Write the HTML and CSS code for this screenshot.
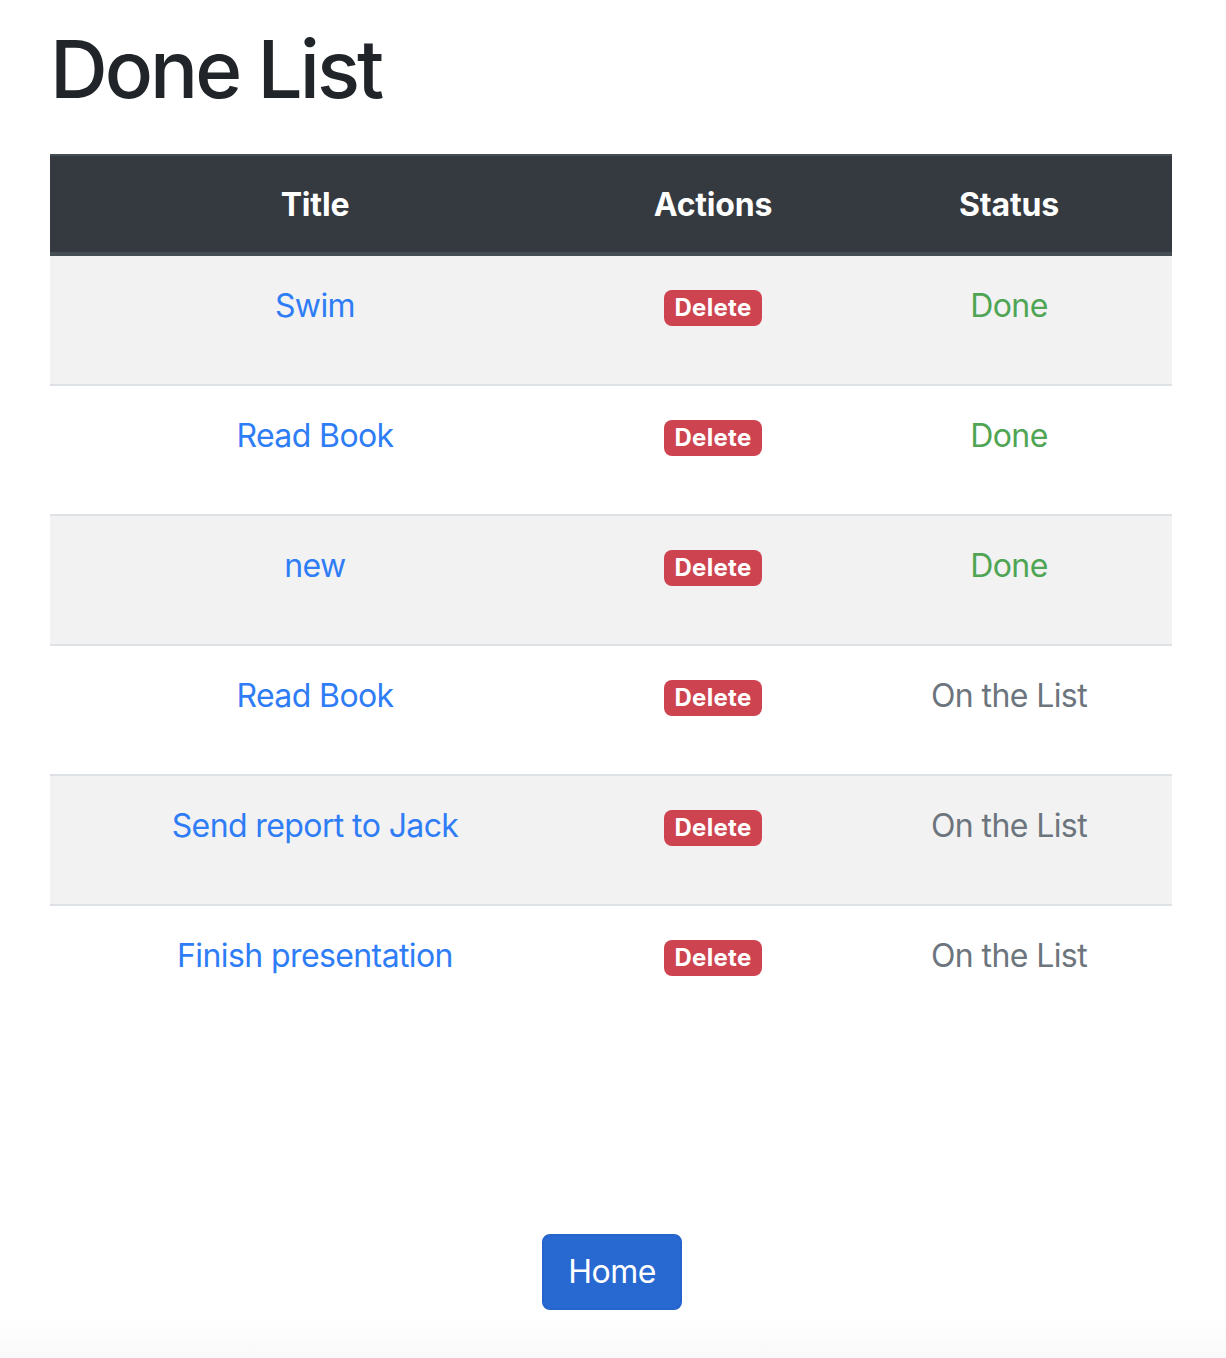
FILE: index.html
```html
<!DOCTYPE html>
<html lang="en">
<head>
<meta charset="utf-8">
<title>Done List</title>
<link rel="stylesheet" href="styles.css">
</head>
<body>
<div class="page">
  <h1 class="page-title">Done List</h1>
  <table class="task-table">
    <colgroup>
      <col class="col-title">
      <col class="col-actions">
      <col class="col-status">
    </colgroup>
    <thead>
      <tr><th>Title</th><th>Actions</th><th>Status</th></tr>
    </thead>
    <tbody>
      <tr class="striped">
        <td><a class="task-link" href="#">Swim</a></td>
        <td><form class="del-form"><button type="button" class="badge-del">Delete</button></form></td>
        <td class="st-done">Done</td>
      </tr>
      <tr>
        <td><a class="task-link" href="#">Read Book</a></td>
        <td><form class="del-form"><button type="button" class="badge-del">Delete</button></form></td>
        <td class="st-done">Done</td>
      </tr>
      <tr class="striped">
        <td><a class="task-link" href="#">new</a></td>
        <td><form class="del-form"><button type="button" class="badge-del">Delete</button></form></td>
        <td class="st-done">Done</td>
      </tr>
      <tr>
        <td><a class="task-link" href="#">Read Book</a></td>
        <td><form class="del-form"><button type="button" class="badge-del">Delete</button></form></td>
        <td class="st-list">On the List</td>
      </tr>
      <tr class="striped">
        <td><a class="task-link" href="#">Send report to Jack</a></td>
        <td><form class="del-form"><button type="button" class="badge-del">Delete</button></form></td>
        <td class="st-list">On the List</td>
      </tr>
      <tr>
        <td><a class="task-link" href="#">Finish presentation</a></td>
        <td><form class="del-form"><button type="button" class="badge-del">Delete</button></form></td>
        <td class="st-list">On the List</td>
      </tr>
    </tbody>
  </table>
  <div class="home-wrap">
    <a class="btn-home" href="#">Home</a>
  </div>
</div>
</body>
</html>
```
FILE: styles.css
```css
html, body {
  margin: 0;
  padding: 0;
}
body {
  height: 1358px;
  overflow: hidden;
  background: linear-gradient(to bottom, #ffffff 0, #ffffff 1318px, #f9f9f9 1358px);
  font-family: Inter, "Liberation Sans", Arial, sans-serif;
  color: #212529;
}
.page {
  padding: 0 54px 0 50px;
}
.page-title {
  margin: 21px 0 37px 0;
  font-size: 80px;
  line-height: 96px;
  font-weight: 500;
  letter-spacing: -3px;
  color: #212529;
}
.task-table {
  width: 1122px;
  border-collapse: collapse;
  font-size: 32px;
  line-height: 48px;
  text-align: center;
}
.col-title { width: 530px; }
.col-actions { width: 266px; }
.col-status { width: 326px; }
.task-table th {
  background: #343a40;
  color: #ffffff;
  font-weight: 700;
  padding: 25px 24px 23px 24px;
  border-top: 2px solid #454d55;
  border-bottom: 4px solid #454d55;
  vertical-align: bottom;
  letter-spacing: -0.2px;
}
.task-table td {
  padding: 26px 24px 22px 24px;
  border-top: 2px solid #dee2e6;
  vertical-align: top;
  letter-spacing: -0.6px;
}
.task-table tbody tr:first-child td {
  border-top: none;
}
.striped td {
  background: #f2f2f2;
}
.task-link {
  color: #2f7df6;
  text-decoration: none;
}
.del-form {
  margin: 0 0 32px 0;
}
.badge-del {
  display: inline-block;
  font-family: Inter, "Liberation Sans", Arial, sans-serif;
  font-size: 24px;
  line-height: 24px;
  font-weight: 700;
  color: #ffffff;
  background: #cd4450;
  border: none;
  border-radius: 8px;
  padding: 6px 10px;
  margin: 0;
  letter-spacing: 0.3px;
  vertical-align: 1px;
}
.st-done {
  color: #4fa553;
}
.st-list {
  color: #6c757d;
}
.home-wrap {
  display: flex;
  justify-content: center;
  margin-top: 200px;
  padding-left: 2px;
}
.btn-home {
  display: inline-block;
  background: #2869d1;
  color: #ffffff;
  text-decoration: none;
  font-size: 32px;
  line-height: 48px;
  padding: 12px 24px;
  border: 2px solid #2464cc;
  border-radius: 8px;
  letter-spacing: -0.5px;
}
```
